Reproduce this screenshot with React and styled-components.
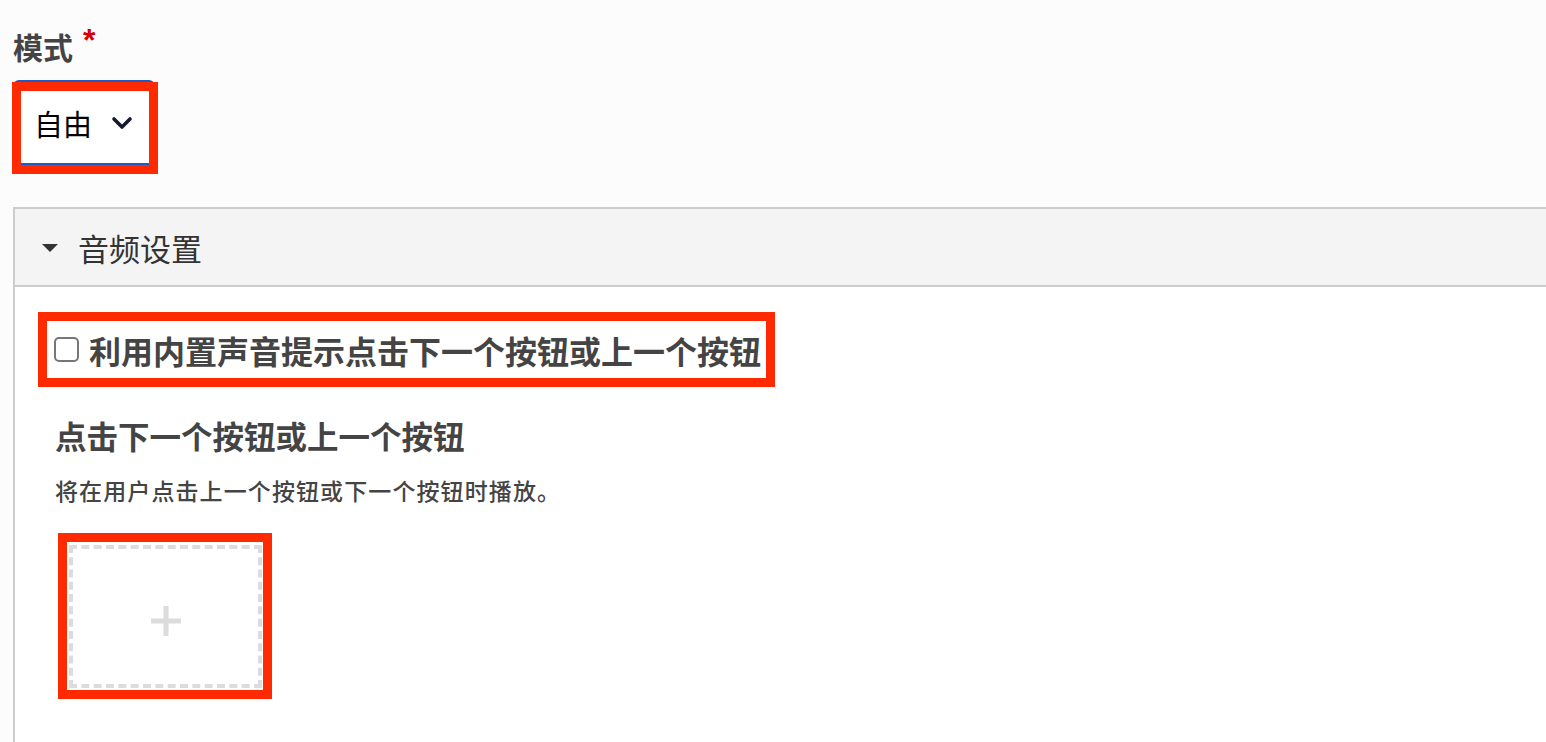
import React, { useState } from "react";
import styled, { createGlobalStyle } from "styled-components";

const GlobalStyle = createGlobalStyle`
  html, body {
    margin: 0;
    padding: 0;
    background: #fcfcfc;
    overflow: hidden;
  }
  body {
    font-family: "Noto Sans CJK SC", "Noto Sans", sans-serif;
    color: #444;
  }
`;

const Page = styled.div`
  padding: 26px 0 0 13px;
  height: 742px;
  box-sizing: border-box;
  overflow: hidden;
`;

const FieldLabel = styled.div`
  font-size: 30px;
  line-height: 40px;
  font-weight: 700;
  color: #444;
  display: flex;
  align-items: flex-start;
  gap: 10px;
`;

const Required = styled.span`
  color: #d40000;
  font-family: "Liberation Sans", sans-serif;
  font-size: 32px;
  line-height: 32px;
  margin-top: -2px;
`;

// red annotation rectangle drawn over an element
const Marked = styled.div`
  position: relative;
  display: inline-flex;

  &::after {
    content: "";
    position: absolute;
    top: ${(p) => p.$t}px;
    left: ${(p) => p.$l}px;
    right: ${(p) => p.$r}px;
    bottom: ${(p) => p.$b}px;
    border: 9px solid #ff2a00;
    pointer-events: none;
  }
`;

const SelectRow = styled.div`
  margin-top: 14px;
`;

const Select = styled.div`
  width: 142px;
  height: 85px;
  box-sizing: border-box;
  border: 2px solid #1f5bc6;
  border-radius: 6px;
  background: #fff;
  display: flex;
  align-items: center;
  padding-left: 19px;
  gap: 19px;
  font-size: 29px;
  color: #000;
  cursor: pointer;
`;

const Chevron = () => (
  <svg width="22" height="14" viewBox="0 0 22 14">
    <polyline
      points="3,3 11,11 19,3"
      fill="none"
      stroke="#151a2e"
      strokeWidth="3.6"
      strokeLinecap="round"
      strokeLinejoin="round"
    />
  </svg>
);

const Panel = styled.section`
  margin-top: 42px;
  border: 2px solid #ccc;
  border-right: none;
  background: #fff;
  min-height: 600px;
`;

const PanelHeader = styled.div`
  height: 76px;
  background: #f4f4f4;
  border-bottom: 2px solid #ccc;
  display: flex;
  align-items: center;
  padding-left: 27px;
  gap: 20px;
  font-size: 31px;
  color: #333;
  cursor: pointer;
`;

const Caret = styled.span`
  width: 0;
  height: 0;
  border-left: 8px solid transparent;
  border-right: 8px solid transparent;
  border-top: 8px solid #333;
  margin-top: 2px;
`;

const PanelBody = styled.div`
  padding: 25px 0 0 23px;
`;

const CheckRow = styled.label`
  width: 737px;
  height: 75px;
  box-sizing: border-box;
  display: flex;
  align-items: center;
  padding-left: 16px;
  gap: 10px;
  font-size: 32px;
  font-weight: 700;
  color: #444;
  white-space: nowrap;
  cursor: pointer;
`;

const Box = styled.span`
  width: 25px;
  height: 25px;
  box-sizing: border-box;
  border: 2px solid #767676;
  border-radius: 5px;
  background: ${(p) => (p.$on ? "#1f5bc6" : "#fff")};
  flex-shrink: 0;
`;

const Section = styled.div`
  padding-left: 17px;
`;

const Heading = styled.h3`
  margin: 28px 0 0;
  font-size: 31.5px;
  line-height: 40px;
  font-weight: 700;
  color: #444;
`;

const Hint = styled.p`
  margin: 20px 0 0;
  font-size: 23px;
  line-height: 30px;
  font-weight: 500;
  letter-spacing: 1.1px;
  color: #444;
`;

const UploadWrap = styled.div`
  margin-top: 40px;
  margin-left: 14px;
`;

const Upload = styled.button`
  width: 193px;
  height: 143px;
  box-sizing: border-box;
  border: 4px dashed #dcdcdc;
  background: #fff;
  display: flex;
  align-items: center;
  justify-content: center;
  padding: 8px 0 0;
  cursor: pointer;
`;

const Plus = () => (
  <svg width="32" height="32" viewBox="0 0 32 32">
    <path d="M16 1V31M1 16H31" stroke="#dcdcdc" strokeWidth="5" fill="none" />
  </svg>
);

export default function App() {
  const [checked, setChecked] = useState(false);

  return (
    <Page>
      <GlobalStyle />
      <FieldLabel>
        模式<Required>*</Required>
      </FieldLabel>
      <SelectRow>
        <Marked $t={2} $l={-1} $r={-3} $b={-9}>
          <Select>
            自由
            <Chevron />
          </Select>
        </Marked>
      </SelectRow>

      <Panel>
        <PanelHeader>
          <Caret />
          音频设置
        </PanelHeader>
        <PanelBody>
          <Marked $t={0} $l={0} $r={0} $b={0}>
            <CheckRow onClick={() => setChecked(!checked)}>
              <Box $on={checked} />
              利用内置声音提示点击下一个按钮或上一个按钮
            </CheckRow>
          </Marked>
          <Section>
            <Heading>点击下一个按钮或上一个按钮</Heading>
            <Hint>将在用户点击上一个按钮或下一个按钮时播放。</Hint>
            <UploadWrap>
              <Marked $t={-12} $l={-11} $r={-10} $b={-11}>
                <Upload aria-label="添加音频">
                  <Plus />
                </Upload>
              </Marked>
            </UploadWrap>
          </Section>
        </PanelBody>
      </Panel>
    </Page>
  );
}
